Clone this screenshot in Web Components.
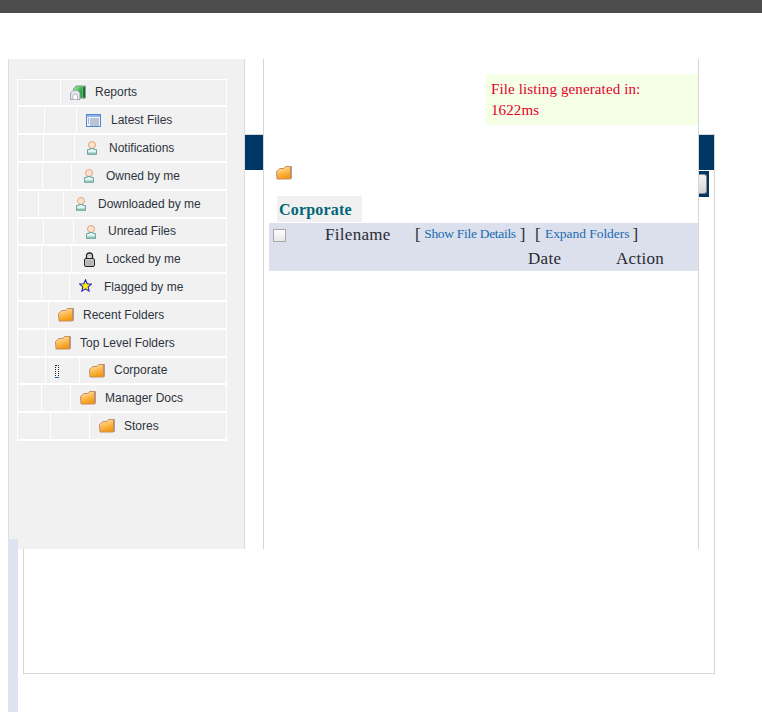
<!DOCTYPE html>
<html lang="en">

<head>
  <meta charset="UTF-8">
  <title>File listing</title>
  <style>
    html, body { margin: 0; padding: 0; background: #fff; }
  </style>
</head>

<body>
  <file-page>
    <side-nav>
      <nav-row h="27" up cols="43" pad="9" icon="report">Reports</nav-row>
      <nav-row cols="27 32" pad="9" icon="list">Latest Files</nav-row>
      <nav-row cols="26 31" pad="12" icon="user">Notifications</nav-row>
      <nav-row cols="25 29" pad="12" icon="user">Owned by me</nav-row>
      <nav-row cols="21 25" pad="12" icon="user">Downloaded by me</nav-row>
      <nav-row h="27" up cols="26 30" pad="12" icon="user">Unread Files</nav-row>
      <nav-row cols="24 30" pad="12" icon="lock">Locked by me</nav-row>
      <nav-row cols="24 28" pad="9" icon="star" raise>Flagged by me</nav-row>
      <nav-row cols="31" pad="9" icon="folder">Recent Folders</nav-row>
      <nav-row cols="28" pad="9" icon="folder">Top Level Folders</nav-row>
      <nav-row h="27" up cols="28 34" pad="9" icon="folder"><focus-mark slot="extra"></focus-mark>Corporate</nav-row>
      <nav-row cols="24 29" pad="9" icon="folder">Manager Docs</nav-row>
      <nav-row cols="33 39" pad="9" icon="folder">Stores</nav-row>
    </side-nav>
    <file-panel heading="Corporate">
      <span slot="message">File listing generated in:<br>1622ms</span>
      <file-header></file-header>
    </file-panel>
  </file-page>

  <template id="tmpl-page">
    <style>
      :host {
        display: grid;
        width: 762px;
        height: 712px;
        overflow: hidden;
        /* lines: 8 18 23 245 263 699 709 715 */
        grid-template-columns: 8px 10px 5px 222px 18px 436px 10px 6px 47px;
        /* lines: 13 59 134 171 197 539 549 674 */
        grid-template-rows: 13px 46px 75px 37px 26px 342px 10px 125px 38px;
      }
      .bar { grid-column: 1 / -1; grid-row: 1; background: #4d4d4d; }
      .frame {
        grid-column: 4 / 9;
        grid-row: 4 / 9;
        border: 1px solid #d6d6d6;
        box-sizing: border-box;
      }
      .band { height: 35px; margin-left: 221px; background: #003764; }
      .stub {
        grid-column: 7;
        grid-row: 5;
        background: #003764;
        display: flex;
        align-items: center;
        justify-content: flex-end;
        padding-right: 2px;
        z-index: 1;
      }
      .stub i {
        display: block;
        width: 8px;
        height: 20px;
        box-sizing: border-box;
        background: linear-gradient(#f4f4f4, #d4d4d4);
        border: 1px solid #8a8a8a;
        border-left: 0;
        border-radius: 0 3px 3px 0;
      }
      .strip { grid-column: 2; grid-row: 7 / 10; background: #dde3f0; z-index: 2; }
    </style>
    <div class="bar"></div>
    <div class="frame"><div class="band"></div></div>
    <div class="stub"><i></i></div>
    <slot></slot>
    <div class="strip"></div>
  </template>

  <template id="tmpl-nav">
    <style>
      :host {
        grid-column: 2 / 5;
        grid-row: 3 / 8;
        z-index: 1;
        display: block;
        box-sizing: border-box;
        background: #f1f1f1;
        border-left: 1px solid #dcdcdc;
        border-right: 1px solid #dcdcdc;
        padding: 20px 17px 0 8px;
        font: 12px "Liberation Sans", Arial, sans-serif;
        color: #2e3440;
      }
      .tbl { border: 1px solid #fff; border-bottom: 0; }
    </style>
    <div class="tbl"><slot></slot></div>
  </template>

  <template id="tmpl-row">
    <style>
      :host { display: flex; box-sizing: border-box; border-bottom: 2px solid #fff; }
      .cell { flex: none; box-sizing: border-box; border-right: 1px solid #fff; position: relative; }
      .main { flex: 1; display: flex; align-items: center; white-space: nowrap; }
      .up { position: relative; top: -1px; }
      .raise { position: relative; top: -2px; }
    </style>
  </template>

  <template id="tmpl-panel">
    <style>
      :host {
        grid-column: 6;
        grid-row: 3 / 8;
        z-index: 1;
        display: flex;
        flex-direction: column;
        box-sizing: border-box;
        background: #fff;
        border-left: 1px solid #d6d6d6;
        border-right: 1px solid #d6d6d6;
        padding-top: 15px;
        font: 15px/21px "Liberation Serif", Georgia, serif;
      }
      .msg {
        align-self: flex-end;
        box-sizing: border-box;
        width: 212px;
        height: 51px;
        padding: 5px;
        background: #f5ffe6;
        color: #e4002b;
        letter-spacing: 0.12px;
      }
      .icon { margin: 41px 0 0 12px; height: 13px; display: block; }
      h2 {
        align-self: flex-start;
        margin: 17px 0 1px 13px;
        width: 85px;
        height: 26px;
        box-sizing: border-box;
        padding: 3px 2px 1px;
        background: #f1f1f1;
        color: #006778;
        font-size: 16px;
        font-weight: bold;
        line-height: 22px;
        letter-spacing: 0.2px;
      }
    </style>
    <div class="msg"><slot name="message"></slot></div>
    <tree-icon class="icon" name="folder"></tree-icon>
    <h2></h2>
    <slot></slot>
  </template>

  <template id="tmpl-header">
    <style>
      :host {
        display: block;
        box-sizing: border-box;
        margin-left: 5px;
        height: 48px;
        background: #dbe0ec;
        color: #2b2b33;
        font: 17px/24px "Liberation Serif", Georgia, serif;
        letter-spacing: 0.3px;
      }
      .top { display: flex; align-items: flex-start; height: 24px; }
      .check {
        width: 13px;
        height: 13px;
        margin: 6px 0 0 4px;
        box-sizing: border-box;
        border: 1px solid #a8a8a8;
        background: linear-gradient(#fff, #e8e8e8);
        flex: none;
      }
      .name { margin-left: 39px; width: 90px; flex: none; }
      .tool { flex: none; display: flex; letter-spacing: 0; }
      .tool a { color: #1a6bb0; font-size: 13.5px; line-height: 22px; text-decoration: none; }
      .bottom { display: flex; height: 24px; }
      .date { margin-left: 259px; width: 88px; }
    </style>
    <div class="top">
      <div class="check"></div>
      <div class="name">Filename</div>
      <div class="tool"><span>[</span><a style="margin-left:3.500px;letter-spacing:-0.3px">Show File Details</a><span style="margin-left:4px">]</span></div>
      <div class="tool" style="margin-left:9.500px"><span>[</span><a style="margin-left:4.300px;letter-spacing:-0.05px">Expand Folders</a><span style="margin-left:3px">]</span></div>
    </div>
    <div class="bottom"><div class="date">Date</div><div>Action</div></div>
  </template>

  <script>
    // [width, height, gap before the label, svg body]
    const ICONS = {
      folder: [16, 14, 9, `
        <defs><linearGradient id="f" x1="0" y1="0" x2="0.4" y2="1"><stop offset="0" stop-color="#fff3d6"/><stop offset="0.5" stop-color="#fcc05a"/><stop offset="1" stop-color="#f59a12"/></linearGradient></defs>
        <path d="M12 .5h3.500v12H12z" fill="#e4dcdc" stroke="#b59a9a"/>
        <path d="M.5 5.500 4 2.500h4L9.500.5h5v12.500H1z" fill="url(#f)" stroke="#c98d5c"/>`],
      report: [16, 15, 9, `
        <defs><linearGradient id="g" x1="0" y1="0" x2="1" y2="1"><stop offset="0" stop-color="#c4eebc"/><stop offset="0.5" stop-color="#1fb53c"/><stop offset="1" stop-color="#0b8a2a"/></linearGradient></defs>
        <path d="M3.500 4 6 1h9.500v12h-12z" fill="url(#g)" stroke="#6fa87e"/>
        <path d="M12.500 1.500h3v11.500h-3z" fill="#0b7a2a" stroke="#8a9f90"/>
        <path d="M.5 14.500V8L3 5.500h4.500L10 8v6.500z" fill="#e4e7ea" stroke="#a2a7b0"/>
        <path d="M3 14.500V11q0-2 2.200-2t2.200 2v3.500z" fill="#fff" stroke="#b4b8bf"/>`],
      list: [15, 13, 10, `
        <rect x=".5" y=".5" width="14" height="12" fill="#eef3fb" stroke="#4f87d0"/>
        <rect x="1" y="1" width="13" height="2" fill="#8fb5e6"/>
        <path d="M4 5h9M4 7h9M4 9h9M4 11h9" stroke="#8a94a6"/>
        <path d="M2 5h1M2 7h1M2 9h1" stroke="#3f7fd0"/>`],
      user: [10, 14, 12, `
        <circle cx="5" cy="4" r="3.500" fill="#fbe3d2" stroke="#e2a679"/>
        <path d="M.5 8.500h2.500v-1h4v1h2.500v5h-9z" fill="#e2f2ee" stroke="#6fa6a0"/>
        <path d="M1 11.500h8v2H1z" fill="#8fbfb8"/>`],
      lock: [11, 15, 11, `
        <path d="M2.500 6.500V4q0-3 3-3t3 3v2.500" fill="none" stroke="#222" stroke-width="1.300"/>
        <path d="M4 6.500V4.500Q4 3 5.500 3T7 4.500v2" fill="none" stroke="#aaa"/>
        <rect x=".5" y="6.500" width="10" height="8" rx="1.500" fill="#d2d2d2" stroke="#222"/>
        <path d="M1.500 9h8M1.500 11h8M1.500 13h8" stroke="#9a9a9a"/>`],
      star: [13, 13, 12, `
        <path d="M6.500.8 8.200 4.700l4.200.4-3.200 2.800.9 4.200-3.600-2.200-3.600 2.200.9-4.200L.6 5.100l4.200-.4z" fill="#fff200" stroke="#2424c8" stroke-width="1.100"/>`]
    };

    class TreeIcon extends HTMLElement {
      connectedCallback() {
        const [w, h, , body] = ICONS[this.getAttribute('name')];
        const shadow = this.attachShadow({ mode: 'open' });
        shadow.innerHTML = `<style>:host{display:inline-block;line-height:0}</style>
          <svg width="${w}" height="${h}" viewBox="0 0 ${w} ${h}">${body}</svg>`;
      }
    }

    class FocusMark extends HTMLElement {
      constructor() {
        super();
        this.attachShadow({ mode: 'open' }).innerHTML = `<style>
          :host{display:block;position:absolute;left:9px;top:7px;width:4px;height:13px;box-sizing:border-box;
            border:1px dotted #222;border-bottom:1px solid #2a6fd0}
        </style>`;
      }
    }

    // simple helper so each class clones its own template
    function mount(el, id) {
      const shadow = el.attachShadow({ mode: 'open' });
      shadow.appendChild(document.getElementById(id).content.cloneNode(true));
      return shadow;
    }

    class FilePage extends HTMLElement {
      constructor() { super(); mount(this, 'tmpl-page'); }
    }

    class SideNav extends HTMLElement {
      constructor() { super(); mount(this, 'tmpl-nav'); }
    }

    class NavRow extends HTMLElement {
      constructor() { super(); this.shadow = mount(this, 'tmpl-row'); }
      connectedCallback() {
        this.style.height = (this.getAttribute('h') || 28) + 'px';
        const widths = this.getAttribute('cols').split(' ');
        widths.forEach((w, i) => {
          const cell = document.createElement('div');
          cell.className = 'cell';
          cell.style.width = w + 'px';
          if (i === widths.length - 1) cell.innerHTML = '<slot name="extra"></slot>';
          this.shadow.appendChild(cell);
        });
        const main = document.createElement('div');
        main.className = 'main';
        main.style.paddingLeft = this.getAttribute('pad') + 'px';
        const name = this.getAttribute('icon');
        const icon = document.createElement('tree-icon');
        icon.setAttribute('name', name);
        icon.style.marginRight = ICONS[name][2] + 'px';
        if (this.hasAttribute('raise')) icon.className = 'raise';
        main.appendChild(icon);
        const label = document.createElement('span');
        if (this.hasAttribute('up')) label.className = 'up';
        label.innerHTML = '<slot></slot>';
        main.appendChild(label);
        this.shadow.appendChild(main);
      }
    }

    class FilePanel extends HTMLElement {
      constructor() { super(); this.shadow = mount(this, 'tmpl-panel'); }
      connectedCallback() {
        this.shadow.querySelector('h2').textContent = this.getAttribute('heading');
      }
    }

    class FileHeader extends HTMLElement {
      constructor() { super(); mount(this, 'tmpl-header'); }
    }

    customElements.define('tree-icon', TreeIcon);
    customElements.define('focus-mark', FocusMark);
    customElements.define('file-page', FilePage);
    customElements.define('side-nav', SideNav);
    customElements.define('nav-row', NavRow);
    customElements.define('file-panel', FilePanel);
    customElements.define('file-header', FileHeader);
  </script>
</body>

</html>
